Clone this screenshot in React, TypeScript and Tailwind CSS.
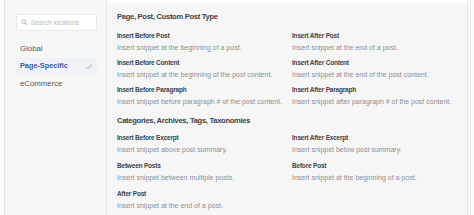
import React from "react";

const font = { fontFamily: "'Liberation Sans', Arial, sans-serif" };

type Item = { t: string; d: string };

const sec1: Item[] = [
  { t: "Insert Before Post", d: "Insert snippet at the beginning of a post." },
  { t: "Insert After Post", d: "Insert snippet at the end of a post." },
  { t: "Insert Before Content", d: "Insert snippet at the beginning of the post content." },
  { t: "Insert After Content", d: "Insert snippet at the end of the post content." },
  { t: "Insert Before Paragraph", d: "Insert snippet before paragraph # of the post content." },
  { t: "Insert After Paragraph", d: "Insert snippet after paragraph # of the post content." },
];

const sec2: Item[] = [
  { t: "Insert Before Excerpt", d: "Insert snippet above post summary." },
  { t: "Insert After Excerpt", d: "Insert snippet below post summary." },
  { t: "Between Posts", d: "Insert snippet between multiple posts." },
  { t: "Before Post", d: "Insert snippet at the beginning of a post." },
  { t: "After Post", d: "Insert snippet at the end of a post." },
];

function Grid({ items, wide }: { items: Item[]; wide?: boolean }) {
  return (
    <div className={wide ? "grid grid-cols-[175px_175px] gap-y-[4px]" : "grid grid-cols-[175px_175px] gap-y-[3px]"}>
      {items.map((it) => (
        <div key={it.t} className="h-[24px]">
          <div className="text-[6.5px] leading-[10px] font-bold tracking-[-0.2px] text-[#3c434a]">{it.t}</div>
          <div className="text-[7px] leading-[10px] mt-[2px] text-[#8c8f94]">{it.d}</div>
        </div>
      ))}
    </div>
  );
}

export default function App() {
  return (
    <div style={font} className="w-[474px] h-[215px] bg-white flex overflow-hidden">
      <div className="w-[4px] bg-[#fcfcfc]" />
      <div className="flex-1 flex border-l border-r border-[#e4e4e4] bg-[#f6f6f6]">
        <div className="w-[102px] border-r border-[#e6e6e6] flex flex-col pl-[11px] pr-[9px] pt-[14px] bg-[#f7f7f7]">
          <div className="h-[17px] bg-white border border-[#e9e9e9] rounded-[2px] flex items-center px-[4px] gap-[3px]">
            <svg width="7" height="7" viewBox="0 0 16 16" fill="none" stroke="#a7aaad" strokeWidth="2">
              <circle cx="6.5" cy="6.5" r="4.5" />
              <path d="M10 10l4 4" />
            </svg>
            <span className="text-[6.5px] text-[#b4b7ba]">Search locations</span>
          </div>
          <div className="mt-[9px] flex flex-col">
            <div className="h-[18px] flex items-center px-[4px] text-[7.8px] text-[#50575e]">Global</div>
            <div className="h-[17px] flex items-center justify-between px-[4px] bg-[#eff2f7] text-[7.3px] font-bold text-[#3b5a99]">
              <span>Page-Specific</span>
              <svg width="8" height="7" viewBox="0 0 16 14" fill="none" stroke="#8a96b0" strokeWidth="1.6">
                <path d="M2 7.5l4 4L14 2.5" />
              </svg>
            </div>
            <div className="h-[18px] flex items-center px-[4px] text-[7.8px] text-[#50575e]">eCommerce</div>
          </div>
        </div>
        <div className="flex-1 flex flex-col">
          <div className="h-[3px] bg-white" />
          <div className="pl-[10px] pt-[8px]">
            <div className="text-[7.6px] leading-[12px] font-bold tracking-[-0.3px] text-[#3c434a] mb-[8px]">Page, Post, Custom Post Type</div>
            <Grid items={sec1} />
            <div className="text-[7.6px] leading-[12px] font-bold tracking-[-0.3px] text-[#3c434a] mt-[6px] mb-[6px]">Categories, Archives, Tags, Taxonomies</div>
            <Grid items={sec2} wide />
          </div>
        </div>
      </div>
      <div className="w-[2px] bg-white" />
      <div className="w-[1px] bg-[#eaeaea]" />
      <div className="w-[3px] bg-[#fafafa]" />
    </div>
  );
}
